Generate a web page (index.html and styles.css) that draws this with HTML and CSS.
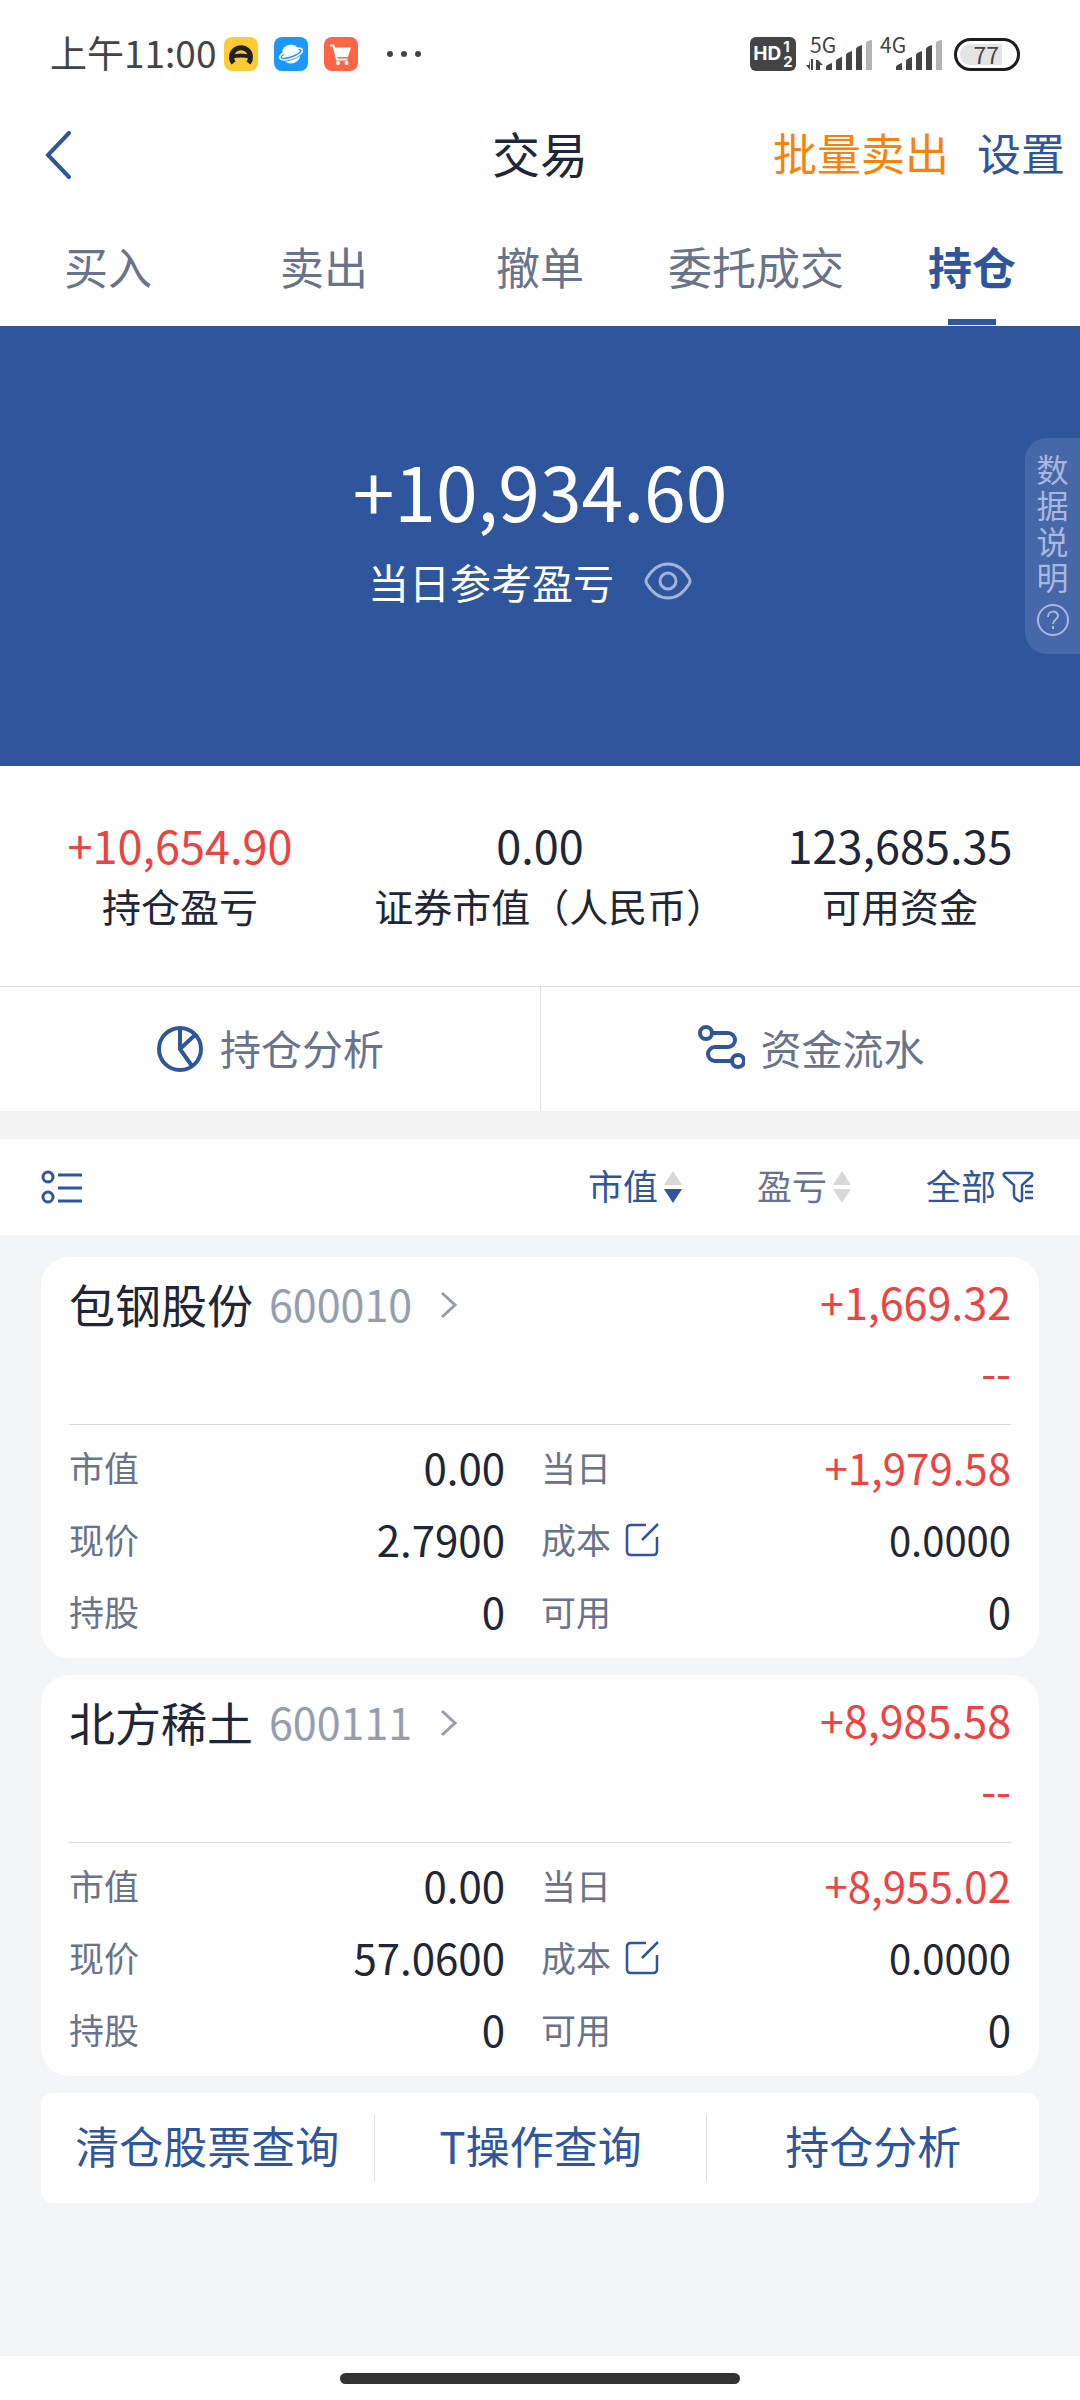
FILE: index.html
```
<!DOCTYPE html>
<html lang="zh-CN">
<head>
    <meta charset="UTF-8">
    <meta name="viewport" content="width=device-width, initial-scale=1.0">
    <title>交易</title>
    <link rel="stylesheet" href="styles.css">
</head>
<body>
<!-- 状态栏 -->
<div class="status-bar">
    <div class="status-left">
        <span class="time">上午11:00</span>
        <svg class="app-icon" viewBox="0 0 34 34">
            <rect width="34" height="34" rx="8" fill="#ffcb32"/>
            <path d="M9.500 26A9.500 9.500 0 1 1 24.500 26" fill="none" stroke="#222" stroke-width="5"/>
            <path d="M7 20Q17 17 27 20" fill="none" stroke="#222" stroke-width="4"/>
        </svg>
        <svg class="app-icon" viewBox="0 0 34 34">
            <rect width="34" height="34" rx="8" fill="#1b98fb"/>
            <circle cx="17" cy="17" r="9.500" fill="#fff"/>
            <ellipse cx="17" cy="17" rx="13" ry="4" fill="none" stroke="#1b98fb" stroke-width="4" transform="rotate(-20 17 17)"/>
            <ellipse cx="17" cy="17" rx="12" ry="4.500" fill="none" stroke="#fff" stroke-width="1.500" transform="rotate(-20 17 17)"/>
            <path d="M9 14A9 9 0 0 1 25 13L24 16L10 20Z" fill="#fff"/>
        </svg>
        <svg class="app-icon" viewBox="0 0 34 34">
            <rect width="34" height="34" rx="8" fill="#fd6547"/>
            <path d="M6 8.500H9.500L13 22.500H23.500" fill="none" stroke="#fff" stroke-width="2"/>
            <path d="M9.500 10.500H27L24 20H12Z" fill="#fff"/>
            <circle cx="14" cy="26" r="2" fill="#fff"/>
            <circle cx="22.500" cy="26" r="2" fill="#fff"/>
        </svg>
        <svg class="dots" viewBox="0 0 36 8" fill="#444">
            <circle cx="4" cy="4" r="3"/>
            <circle cx="18" cy="4" r="3"/>
            <circle cx="32" cy="4" r="3"/>
        </svg>
    </div>
    <div class="status-right">
        <div class="hd"><b>HD</b><span><i>1</i><i>2</i></span></div>
        <div class="signal">
            <span>5G</span>
            <svg viewBox="0 0 68 34" fill="#444">
                <path d="M4 22V33L0 28H3M5 22H7V33H5ZM10 23H12L17 28H14V33H10Z"/>
                <path d="M20 33V30Q20 28 26 26V33ZM30 33V24Q30 22 36 20V33ZM40 33V18Q40 16 46 14V33ZM50 33V12Q50 10 56 8V33Z"/>
                <path d="M60 33V6Q60 4 66 3V33Z" fill="#b4b4b4"/>
            </svg>
        </div>
        <div class="signal">
            <span>4G</span>
            <svg viewBox="0 0 68 34" fill="#444">
                <path d="M20 33V30Q20 28 26 26V33ZM30 33V24Q30 22 36 20V33ZM40 33V18Q40 16 46 14V33ZM50 33V12Q50 10 56 8V33Z"/>
                <path d="M60 33V6Q60 4 66 3V33Z" fill="#b4b4b4"/>
            </svg>
        </div>
        <div class="battery"><span>77</span></div>
    </div>
</div>

<!-- 标题栏 -->
<header class="header">
    <button class="back" aria-label="返回">
        <svg viewBox="0 0 28 48"><path d="M24 2L3 24L24 46" fill="none" stroke="#2f569d" stroke-width="4" stroke-linecap="round"/></svg>
    </button>
    <h1>交易</h1>
    <div class="header-links">
        <a href="#" class="orange">批量卖出</a>
        <a href="#">设置</a>
    </div>
</header>

<nav class="tabs">
    <a href="#">买入</a>
    <a href="#">卖出</a>
    <a href="#">撤单</a>
    <a href="#">委托成交</a>
    <a href="#" class="active">持仓</a>
</nav>

<!-- 当日盈亏 -->
<section class="banner">
    <div class="today-value">+10,934.60</div>
    <div class="today-label">
        <span>当日参考盈亏</span>
        <button aria-label="隐藏金额">
            <svg viewBox="0 0 48 38" fill="none" stroke="#a3b3dc" stroke-width="3">
                <path d="M3 16C9 6 16 2 24 2S39 6 45 16Q47 19 45 22C39 32 32 36 24 36S9 32 3 22Q1 19 3 16Z"/>
                <circle cx="24" cy="19" r="8"/>
            </svg>
        </button>
    </div>
    <button class="data-note">
        <span>数据说明</span>
        <svg viewBox="0 0 32 32" fill="none" stroke="#a9b7de" stroke-width="2">
            <circle cx="16" cy="16" r="15"/>
            <path d="M11 13C11 6 21 6 21 12C21 16 16 15 16 20"/>
            <path d="M16 22V25"/>
        </svg>
    </button>
</section>

<section class="stats">
    <div>
        <strong class="red">+10,654.90</strong>
        <span>持仓盈亏</span>
    </div>
    <div>
        <strong>0.00</strong>
        <span>证券市值（人民币<i>）</i></span>
    </div>
    <div>
        <strong>123,685.35</strong>
        <span>可用资金</span>
    </div>
</section>

<div class="shortcuts">
    <a href="#">
        <svg viewBox="0 0 48 48" fill="none" stroke="#2f569d" stroke-width="4">
            <circle cx="24" cy="24" r="21"/>
            <path d="M24 3V24L36 41M24 24L39 10"/>
        </svg>
        <span>持仓分析</span>
    </a>
    <a href="#">
        <svg viewBox="0 0 48 48" fill="none" stroke="#2f569d" stroke-width="4">
            <circle cx="9" cy="8" r="6"/>
            <circle cx="41" cy="36" r="6"/>
            <path d="M15 8H31A7 7 0 0 1 31 22H18A7 7 0 0 0 18 36H35"/>
        </svg>
        <span>资金流水</span>
    </a>
</div>

<!-- 排序筛选 -->
<div class="filter-bar">
    <button aria-label="列表样式">
        <svg class="list-icon" viewBox="0 0 42 34" fill="none" stroke="#2f569d" stroke-width="3">
            <circle cx="7" cy="7" r="5"/>
            <circle cx="7" cy="27" r="5"/>
            <path d="M17 5H41M17 18H41M17 31H41"/>
        </svg>
    </button>
    <div class="filters">
        <button class="on">
            <span>市值</span>
            <svg class="sort-icon" viewBox="0 0 18 34"><path d="M9 1L18 15H0Z" fill="#d6d8da"/><path d="M9 33L18 19H0Z" fill="#2f569d"/></svg>
        </button>
        <button>
            <span>盈亏</span>
            <svg class="sort-icon" viewBox="0 0 18 34"><path d="M9 1L18 15H0Z" fill="#d6d8da"/><path d="M9 33L18 19H0Z" fill="#d6d8da"/></svg>
        </button>
        <button class="on">
            <span>全部</span>
            <svg class="funnel-icon" viewBox="0 0 32 32" fill="none" stroke="#2f569d" stroke-width="2.500">
                <path d="M2 5Q1 2 4 2H28Q31 2 30 5L20 14V28Q20 31 17 30L13 27Q12 26 12 24V14ZM23 15H31M23 21H31M23 27H31"/>
            </svg>
        </button>
    </div>
</div>

<main class="content">
    <article class="card">
        <div class="card-head">
            <a href="#" class="stock">
                <h2>包钢股份</h2>
                <span>600010</span>
                <svg viewBox="0 0 18 28"><path d="M2 2L15 14L2 26" fill="none" stroke="#969dae" stroke-width="3"/></svg>
            </a>
            <div class="profit">
                <span>+1,669.32</span>
                <span>--</span>
            </div>
        </div>
        <table>
            <tr>
                <th>市值</th>
                <td>0.00</td>
                <th>当日</th>
                <td class="red">+1,979.58</td>
            </tr>
            <tr>
                <th>现价</th>
                <td>2.7900</td>
                <th>成本
                    <button aria-label="修改成本">
                        <svg viewBox="0 0 34 34" fill="none" stroke="#2f569d" stroke-width="2.500">
                            <path d="M21 2H6Q2 2 2 6V28Q2 32 6 32H28Q32 32 32 28V14M17 17L33 1"/>
                        </svg>
                    </button>
                </th>
                <td class="small">0.0000</td>
            </tr>
            <tr>
                <th>持股</th>
                <td>0</td>
                <th>可用</th>
                <td>0</td>
            </tr>
        </table>
    </article>

    <article class="card">
        <div class="card-head">
            <a href="#" class="stock">
                <h2>北方稀土</h2>
                <span>600111</span>
                <svg viewBox="0 0 18 28"><path d="M2 2L15 14L2 26" fill="none" stroke="#969dae" stroke-width="3"/></svg>
            </a>
            <div class="profit">
                <span>+8,985.58</span>
                <span>--</span>
            </div>
        </div>
        <table>
            <tr>
                <th>市值</th>
                <td>0.00</td>
                <th>当日</th>
                <td class="red">+8,955.02</td>
            </tr>
            <tr>
                <th>现价</th>
                <td>57.0600</td>
                <th>成本
                    <button aria-label="修改成本">
                        <svg viewBox="0 0 34 34" fill="none" stroke="#2f569d" stroke-width="2.500">
                            <path d="M21 2H6Q2 2 2 6V28Q2 32 6 32H28Q32 32 32 28V14M17 17L33 1"/>
                        </svg>
                    </button>
                </th>
                <td class="small">0.0000</td>
            </tr>
            <tr>
                <th>持股</th>
                <td>0</td>
                <th>可用</th>
                <td>0</td>
            </tr>
        </table>
    </article>

    <div class="queries">
        <a href="#">清仓股票查询</a>
        <a href="#">T操作查询</a>
        <a href="#">持仓分析</a>
    </div>
</main>

<!-- 底部手势条 -->
<div class="home-bar"><span></span></div>
</body>
</html>
```
FILE: styles.css
```
* {
    box-sizing: border-box;
}

body {
    margin: 0;
    min-height: 100vh;
    display: flex;
    flex-direction: column;
    font-family: "Noto Sans CJK SC", sans-serif;
    color: #1f2635;
    background-color: #fff;
}

a {
    color: #2f569d;
    text-decoration: none;
}

button {
    display: flex;
    align-items: center;
    padding: 0;
    border: none;
    background: none;
    font-family: inherit;
    color: inherit;
    cursor: pointer;
}

svg {
    display: block;
    flex: none;
}

.red {
    color: #ec4343;
}

/* 状态栏 */
.status-bar {
    display: flex;
    justify-content: space-between;
    align-items: center;
    height: 108px;
    padding: 0 60px 0 50px;
    color: #444;
}

.status-left, .status-right {
    display: flex;
    align-items: center;
}

.status-left {
    gap: 16px;
}

.time {
    margin-right: -8px;
    padding-bottom: 4px;
    font-size: 37px;
}

.app-icon {
    width: 34px;
    height: 34px;
}

.dots {
    width: 36px;
    height: 8px;
    margin-left: 12px;
}

.status-right {
    gap: 10px;
}

.hd {
    display: flex;
    align-items: center;
    justify-content: center;
    gap: 2px;
    width: 46px;
    height: 34px;
    border-radius: 6px;
    background-color: #444;
    color: #fff;
    font-family: Inter, sans-serif;
    font-size: 19px;
    line-height: 16px;
}

.hd i {
    display: block;
    font-size: 15px;
    font-style: normal;
    font-weight: 700;
    line-height: 15px;
}

.signal {
    position: relative;
    width: 68px;
    height: 34px;
}

.signal + .signal {
    margin-left: -8px;
}

.signal span {
    position: absolute;
    top: 0;
    left: 4px;
    font-size: 21px;
    line-height: 14px;
}

.signal svg {
    width: 68px;
    height: 34px;
}

.battery {
    width: 66px;
    height: 33px;
    padding: 3px;
    border: 3px solid #1c1c1c;
    border-radius: 17px;
}

.battery span {
    display: block;
    width: 42px;
    height: 21px;
    padding-right: 3px;
    border-radius: 10px 0 0 10px;
    background-color: #e4e4e4;
    font-size: 23px;
    line-height: 20px;
    text-align: right;
}

/* 标题栏 */
.header {
    display: grid;
    grid-template-columns: 1fr auto 1fr;
    align-items: center;
    height: 88px;
    padding: 0 15px;
}

.back {
    padding: 6px 0 0 30px;
}

.back svg {
    width: 28px;
    height: 48px;
}

.header h1 {
    margin: 0;
    font-size: 48px;
    font-weight: 400;
}

.header-links {
    display: flex;
    justify-content: flex-end;
    gap: 28px;
    font-size: 44px;
}

.header-links .orange {
    color: #f8830c;
}

.tabs {
    display: grid;
    grid-template-columns: repeat(5, 1fr);
    padding-top: 10px;
}

.tabs a {
    position: relative;
    text-align: center;
    font-size: 44px;
    line-height: 120px;
    color: #69738a;
}

.tabs .active {
    color: #2f569d;
    font-weight: 700;
}

.tabs .active::after {
    content: "";
    position: absolute;
    left: 50%;
    bottom: 1px;
    width: 48px;
    height: 6px;
    margin-left: -24px;
    background-color: #2f569d;
}

/* 当日盈亏 */
.banner {
    position: relative;
    height: 440px;
    padding-top: 118px;
    background-color: #2f569d;
    color: #fff;
    text-align: center;
}

.today-value {
    font-size: 75px;
    line-height: 92px;
}

.today-label {
    display: flex;
    justify-content: center;
    align-items: center;
    gap: 30px;
    padding-right: 20px;
    font-size: 41px;
    line-height: 90px;
}

.today-label svg {
    width: 48px;
    height: 38px;
}

.data-note {
    position: absolute;
    top: 112px;
    right: 0;
    flex-direction: column;
    gap: 10px;
    width: 55px;
    padding: 12px 10px 18px 10px;
    border-radius: 22px 0 0 22px;
    background-color: #4668a8;
    color: #a9b7de;
    font-size: 32px;
    line-height: 36px;
}

.data-note svg {
    width: 32px;
    height: 32px;
}

.stats {
    display: grid;
    grid-template-columns: repeat(3, 1fr);
    height: 220px;
    padding-top: 49px;
    text-align: center;
}

.stats strong, .stats span {
    display: block;
    line-height: 60px;
}

.stats strong {
    font-size: 45px;
    font-weight: 400;
}

.stats span {
    font-size: 39px;
    white-space: nowrap;
}

/* 右括号只占半个字宽 */
.stats i {
    font-style: normal;
    font-feature-settings: "halt";
}

.shortcuts {
    display: grid;
    grid-template-columns: 1fr 1fr;
    height: 125px;
    border-top: 1px solid #dcdcdc;
}

.shortcuts a {
    display: flex;
    justify-content: center;
    align-items: center;
    gap: 16px;
    font-size: 41px;
    color: #69738a;
}

.shortcuts a + a {
    border-left: 1px solid #e2e2e2;
}

.shortcuts span, .filters span {
    padding-bottom: 5px;
}

.shortcuts svg {
    width: 48px;
    height: 48px;
}

/* 排序筛选 */
.filter-bar {
    display: flex;
    justify-content: space-between;
    align-items: center;
    height: 124px;
    padding: 0 46px 0 41px;
    border-top: 28px solid #f4f4f4;
}

.list-icon {
    width: 42px;
    height: 34px;
}

.filters {
    display: flex;
    gap: 75px;
}

.filters button {
    gap: 6px;
    font-size: 35px;
    color: #69738a;
}

.filters .on {
    color: #2f569d;
}

.sort-icon {
    width: 18px;
    height: 34px;
}

.funnel-icon {
    width: 32px;
    height: 32px;
}

/* 持仓列表 */
.content {
    flex: 1;
    display: flex;
    flex-direction: column;
    gap: 17px;
    padding: 22px 41px;
    background-color: #f3f5f7;
}

.card {
    height: 401px;
    padding: 0 28px;
    border-radius: 28px;
    background-color: #fff;
}

.card-head {
    display: flex;
    justify-content: space-between;
    height: 168px;
    border-bottom: 1px solid #dcdcdc;
}

.stock {
    display: flex;
    align-items: center;
    height: 92px;
}

.stock h2 {
    margin: 0 16px 0 0;
    font-size: 46px;
    font-weight: 400;
    color: #1f2635;
}

.stock span {
    margin-right: 28px;
    font-size: 43px;
    color: #969dae;
}

.stock svg {
    width: 18px;
    height: 28px;
    margin-top: 4px;
}

.profit {
    padding-top: 9px;
    text-align: right;
    font-size: 43px;
    line-height: 70px;
    color: #ec4343;
}

.profit span {
    display: block;
}

.card table {
    width: 100%;
    margin-top: 6px;
    table-layout: fixed;
    border-collapse: collapse;
}

.card th, .card td {
    height: 72px;
    padding: 0;
    line-height: 72px;
}

.card th {
    width: 160px;
    font-size: 35px;
    font-weight: 400;
    text-align: left;
    color: #69738a;
}

.card td {
    font-size: 42px;
    text-align: right;
}

.card td + th {
    width: 230px;
    padding-left: 36px;
}

.card .small {
    font-size: 40px;
}

.card th button {
    display: inline-block;
    margin: -10px 0 0 6px;
    vertical-align: middle;
}

.card th svg {
    width: 34px;
    height: 34px;
}

.queries {
    display: grid;
    grid-template-columns: repeat(3, 1fr);
    padding: 22px 0;
    border-radius: 12px;
    background-color: #fff;
}

.queries a {
    padding-bottom: 6px;
    text-align: center;
    font-size: 44px;
    line-height: 60px;
}

.queries a + a {
    border-left: 1px solid #dfe2e6;
}

/* 底部手势条 */
.home-bar {
    display: flex;
    justify-content: center;
    height: 44px;
    padding-top: 17px;
}

.home-bar span {
    width: 400px;
    height: 11px;
    border-radius: 6px;
    background-color: #333;
}
```
